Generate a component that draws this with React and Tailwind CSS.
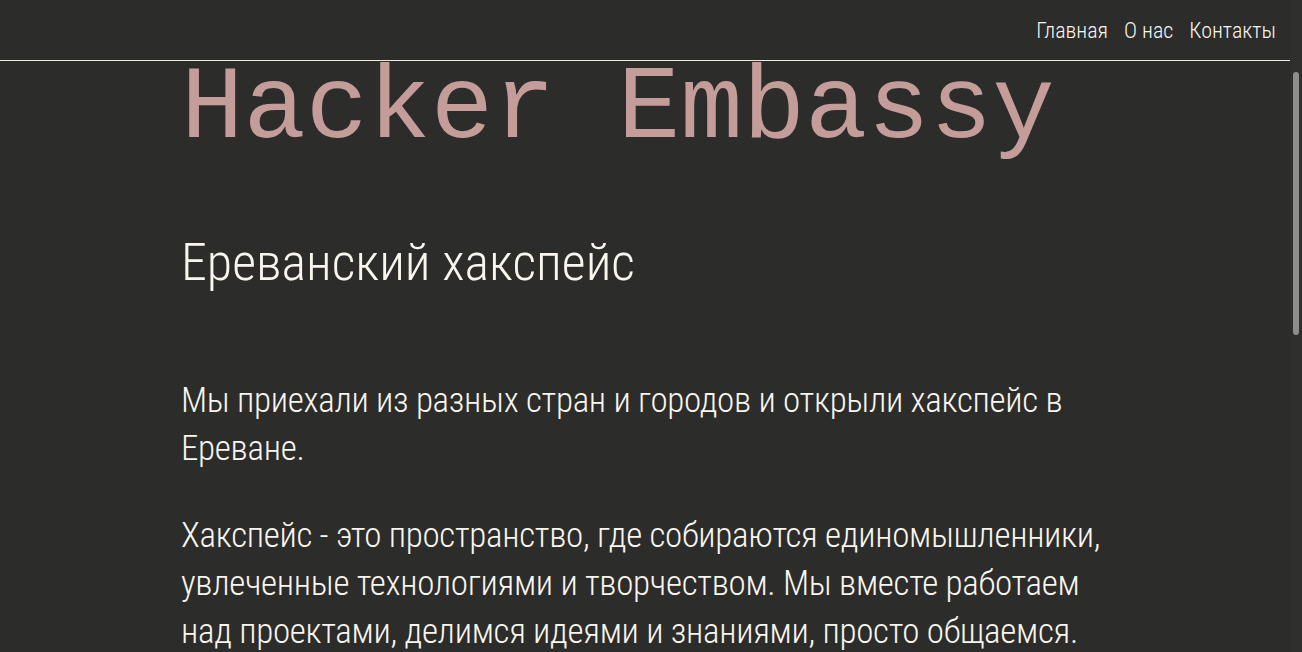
export default function App() {
  return (
    <div className="flex h-screen overflow-hidden bg-[#2c2c2a] font-[Roboto,sans-serif] font-light font-stretch-condensed text-[#f8f6ef]">
      <div className="flex min-w-0 flex-1 flex-col">
        {/* Header */}
        <header className="flex h-[61px] shrink-0 items-center justify-end gap-4 border-b border-[#eeeadf] pr-[14px] text-[22px]">
          <a href="#">Главная</a>
          <a href="#">О нас</a>
          <a href="#">Контакты</a>
        </header>

        <main className="ml-[181px] w-[940px]">
          <h1 className="m-0 font-['Liberation_Mono','Courier_New',monospace] text-[104px] leading-[96px] font-normal font-stretch-normal text-[#c49c99]">
            Hacker Embassy
          </h1>

          <h2 className="mt-[79px] text-[52px] leading-[54px]">
            Ереванский хакспейс
          </h2>

          <p className="mt-[87px] text-[35px] leading-[48px] tracking-[-0.3px]">
            Мы приехали из разных стран и городов и открыли хакспейс в Ереване.
          </p>

          <p className="mt-[39px] text-[35px] leading-[48px] tracking-[-0.3px]">
            Хакспейс - это пространство, где собираются единомышленники,
            увлеченные технологиями и творчеством. Мы вместе работаем над
            проектами, делимся идеями и знаниями, просто общаемся.
          </p>
        </main>
      </div>

      {/* Scrollbar */}
      <div className="w-[12px] shrink-0 bg-[#2f2f2d]">
        <div className="mx-auto mt-[72px] h-[263px] w-[6px] rounded-full bg-[#8e8e8e]" />
      </div>
    </div>
  );
}
